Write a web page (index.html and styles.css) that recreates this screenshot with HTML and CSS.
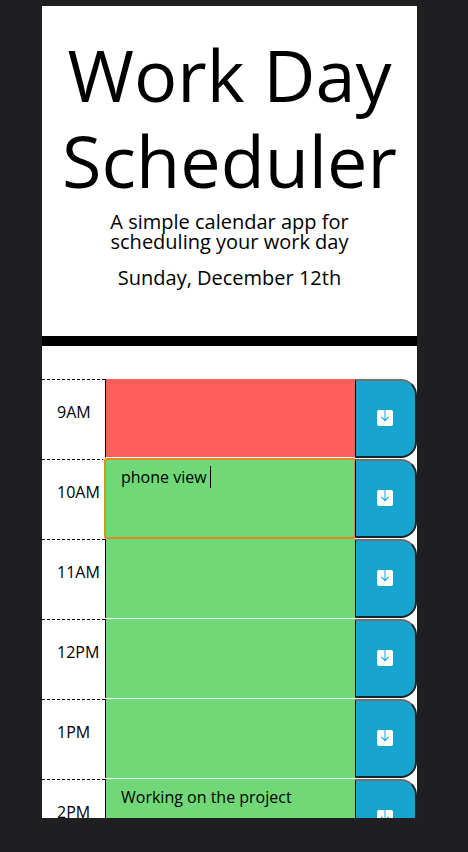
FILE: index.html
```html
<!DOCTYPE html>
<html lang="en">
<head>
<meta charset="utf-8">
<title>Work Day Scheduler</title>
<link rel="stylesheet" href="styles.css">
</head>
<body>
<svg class="defs" aria-hidden="true"><symbol id="save" viewBox="0 0 16 16"><path fill="#fff" d="M2 0H7.5V9.3L5 6.8A.5.5 0 0 0 4.2 7.6L7.6 11A.5.5 0 0 0 8.4 11L11.8 7.6A.5.5 0 0 0 11 6.8L8.5 9.3V0H14A2 2 0 0 1 16 2V14A2 2 0 0 1 14 16H2A2 2 0 0 1 0 14V2A2 2 0 0 1 2 0Z"/></symbol></svg>
<main class="phone">
  <header class="jumbotron">
    <h1>Work Day Scheduler</h1>
    <p class="lead">A simple calendar app for scheduling your work day</p>
    <p class="lead">Sunday, December 12th</p>
  </header>
  <section class="schedule">
    <div class="row"><div class="hour">9AM</div><div class="entry present"></div><button class="save" aria-label="Save"><svg><use href="#save"/></svg></button></div>
    <div class="row"><div class="hour">10AM</div><div class="entry focused">phone view <span class="caret"></span></div><button class="save" aria-label="Save"><svg><use href="#save"/></svg></button></div>
    <div class="row"><div class="hour">11AM</div><div class="entry"></div><button class="save" aria-label="Save"><svg><use href="#save"/></svg></button></div>
    <div class="row"><div class="hour">12PM</div><div class="entry"></div><button class="save" aria-label="Save"><svg><use href="#save"/></svg></button></div>
    <div class="row"><div class="hour">1PM</div><div class="entry"></div><button class="save" aria-label="Save"><svg><use href="#save"/></svg></button></div>
    <div class="row"><div class="hour">2PM</div><div class="entry">Working on the project</div><button class="save" aria-label="Save"><svg><use href="#save"/></svg></button></div>
  </section>
</main>
</body>
</html>
```
FILE: styles.css
```css
* { box-sizing: border-box; }
body {
  margin: 0;
  height: 852px;
  padding: 6px 0 0 42px;
  overflow: hidden;
  background: #1f1f21;
  color: #000;
  font: 16px/24px "Open Sans", sans-serif;
}
.defs { display: none; }
.phone {
  width: 375px;
  height: 812px;
  overflow: hidden;
  background: #fff;
}
.jumbotron {
  height: 340px;
  padding: 25px 15px 0;
  border-bottom: 10px solid #000;
  text-align: center;
}
h1 {
  margin: 0 0 8px;
  font-size: 72px;
  font-weight: 400;
  line-height: 1.2;
}
.lead {
  width: 260px;
  margin: 0 auto 16px;
  font-size: 20px;
  line-height: 20px;
}
.schedule { padding-top: 33px; }
.row {
  display: grid;
  grid-template-columns: 63px 250px 62px;
  height: 80px;
}
.hour {
  padding: 20px 0 0 15px;
  border-top: 1px dashed #000;
}
.entry {
  height: 79px;
  padding: 6px 15px;
  border-left: 1px solid #000;
  background: #70d877;
  white-space: pre;
}
.present { background: #ff5f5b; }
.focused {
  outline: 2px solid #e28c27;
  outline-offset: -1px;
  border-radius: 2px;
  border-left-color: #e28c27;
  box-shadow: 0 0 0 2px #fff;
}
.caret {
  display: inline-block;
  width: 1px;
  height: 22px;
  margin-left: -1px;
  background: #000;
  vertical-align: -5px;
}
.save {
  position: relative;
  display: flex;
  align-items: center;
  justify-content: center;
  height: 79px;
  padding: 0 2px 1px 0;
  border: 2px solid;
  border-color: #707070 #202124 #202124 #000;
  border-left-width: 1px;
  border-radius: 0 16px 16px 0;
  background: #17a5d0;
}
.save svg { width: 16px; height: 16px; }
```
